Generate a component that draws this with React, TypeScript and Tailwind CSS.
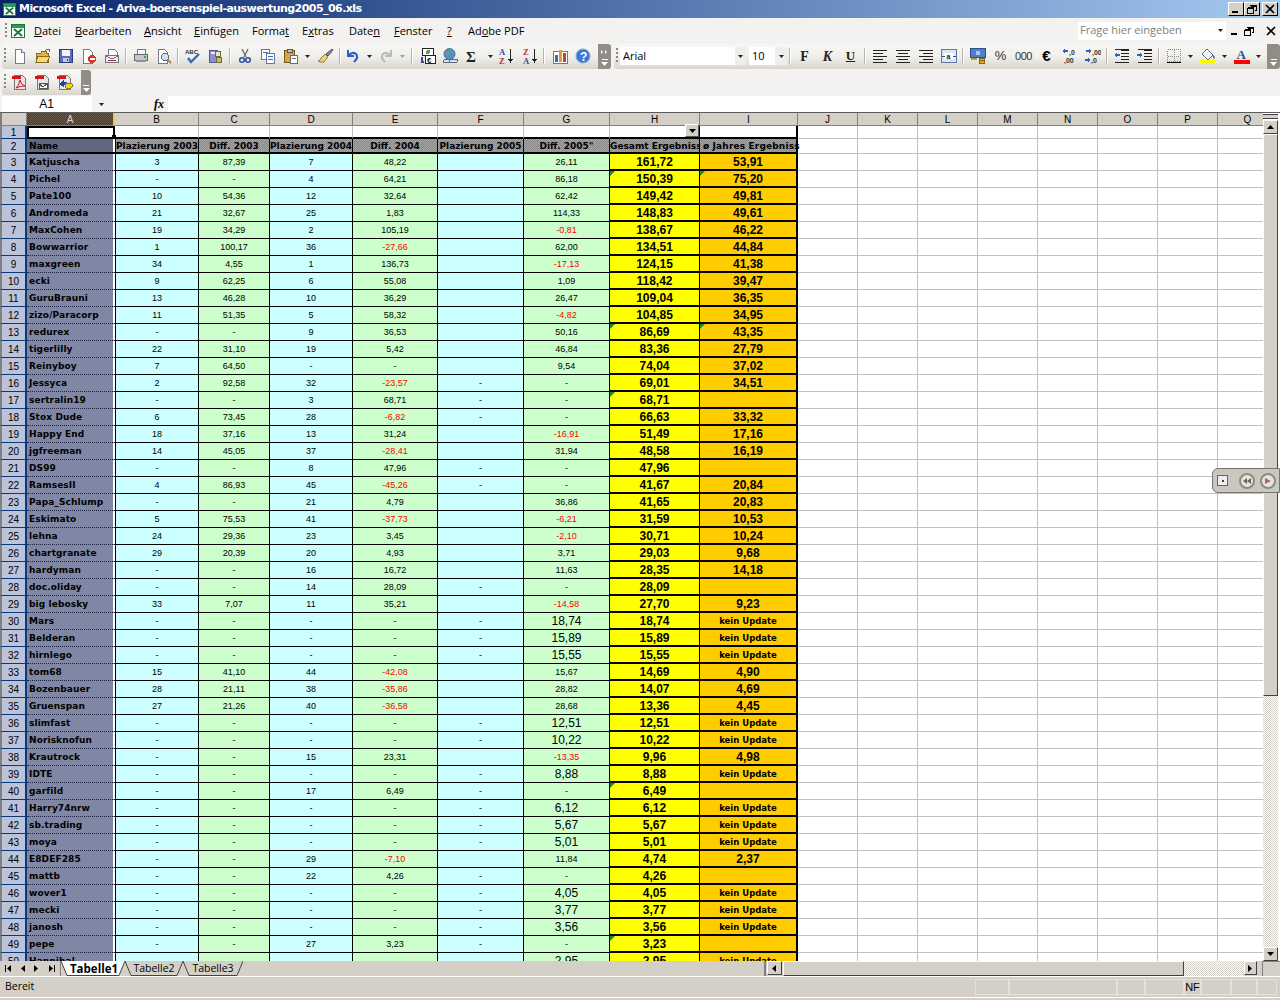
import React from "react";

const RAW = `Katjuscha|3|87,39|7|48,22||26,11|161,72|53,91
Pichel|-|-|4|64,21||86,18|*150,39|*75,20
Pate100|10|54,36|12|32,64||62,42|149,42|49,81
Andromeda|21|32,67|25|1,83||114,33|148,83|49,61
MaxCohen|19|34,29|2|105,19||-0,81|138,67|46,22
Bowwarrior|1|100,17|36|-27,66||62,00|134,51|44,84
maxgreen|34|4,55|1|136,73||-17,13|124,15|41,38
ecki|9|62,25|6|55,08||1,09|118,42|39,47
GuruBrauni|13|46,28|10|36,29||26,47|109,04|36,35
zizo/Paracorp|11|51,35|5|58,32||-4,82|104,85|34,95
redurex|-|-|9|36,53||50,16|*86,69|*43,35
tigerlilly|22|31,10|19|5,42||46,84|83,36|27,79
Reinyboy|7|64,50|-|-||9,54|74,04|37,02
Jessyca|2|92,58|32|-23,57|-|-|69,01|34,51
sertralin19|-|-|3|68,71|-|-|*68,71|
Stox Dude|6|73,45|28|-6,82|-|-|66,63|33,32
Happy End|18|37,16|13|31,24||-16,91|51,49|17,16
jgfreeman|14|45,05|37|-28,41||31,94|48,58|16,19
DS99|-|-|8|47,96|-|-|47,96|
RamsesII|4|86,93|45|-45,26|-|-|41,67|20,84
Papa_Schlump|-|-|21|4,79||36,86|41,65|20,83
Eskimato|5|75,53|41|-37,73||-6,21|31,59|10,53
lehna|24|29,36|23|3,45||-2,10|30,71|10,24
chartgranate|29|20,39|20|4,93||3,71|29,03|9,68
hardyman|-|-|16|16,72||11,63|28,35|14,18
doc.oliday|-|-|14|28,09|-|-|28,09|
big lebosky|33|7,07|11|35,21||-14,58|27,70|9,23
Mars|-|-|-|-|-|^18,74|18,74|k
Belderan|-|-|-|-|-|^15,89|15,89|k
hirnlego|-|-|-|-|-|^15,55|15,55|k
tom68|15|41,10|44|-42,08||15,67|14,69|4,90
Bozenbauer|28|21,11|38|-35,86||28,82|14,07|4,69
Gruenspan|27|21,26|40|-36,58||28,68|13,36|4,45
slimfast|-|-|-|-|-|^12,51|12,51|k
Norisknofun|-|-|-|-|-|^10,22|10,22|k
Krautrock|-|-|15|23,31||-13,35|9,96|4,98
IDTE|-|-|-|-|-|^8,88|8,88|k
garfild|-|-|17|6,49|-|-|*6,49|
Harry74nrw|-|-|-|-|-|^6,12|6,12|k
sb.trading|-|-|-|-|-|^5,67|5,67|k
moya|-|-|-|-|-|^5,01|5,01|k
E8DEF285|-|-|29|-7,10||11,84|4,74|2,37
mattb|-|-|22|4,26|-|-|4,26|
wover1|-|-|-|-|-|^4,05|4,05|k
mecki|-|-|-|-|-|^3,77|3,77|k
janosh|-|-|-|-|-|^3,56|3,56|k
pepe|-|-|27|3,23|-|-|*3,23|
Hannibal||||||^2,95|2,95|k`;
const ROWS = RAW.split("\n").map((l) => l.split("|"));
const COLS = ["A", "B", "C", "D", "E", "F", "G", "H", "I", "J", "K", "L", "M", "N", "O", "P", "Q"];
const HEADS = ["Plazierung 2003", "Diff. 2003", "Plazierung 2004", "Diff. 2004", "Plazierung 2005", "Diff. 2005\"", "Gesamt Ergebniss", "ø Jahres Ergebniss"];

const S = ({ children, w = 16, h = 16 }: { children: React.ReactNode; w?: number; h?: number }) => (
  <svg width={w} height={h} viewBox={`0 0 ${w} ${h}`} className="block" shapeRendering="crispEdges">{children}</svg>
);
const Page = ({ x = 3, y = 1, w = 10, h = 14 }: { x?: number; y?: number; w?: number; h?: number }) => (
  <path d={`M${x + .5} ${y + .5}h${w - 4}l3 3v${h - 3}h-${w - 1}z`} fill="#fff" stroke="#7a7a8c" />
);
const NewI = () => <S><Page /><path d="M9.5 1.5v3h3" fill="#d8d8e4" stroke="#7a7a8c" /></S>;
const OpenI = () => <S><path d="M1 5h5l1-2h4v2h2v9H1z" fill="#e8b33c" stroke="#8a6a1c" /><path d="M3 8h12l-3 6H1z" fill="#f8d878" stroke="#8a6a1c" /><path d="M10 3q2-3 5-1l-1 2" fill="none" stroke="#3b6fc4" /></S>;
const SaveI = () => <S><rect x="1.5" y="1.5" width="13" height="13" fill="#5a6bb8" stroke="#2c3a7a" /><rect x="4" y="2" width="8" height="6" fill="#f2f2f6" /><rect x="5" y="10" width="6" height="4" fill="#c8cce0" /><rect x="9" y="11" width="1" height="2" fill="#2c3a7a" /></S>;
const PermI = () => <S><Page x={2} /><circle cx="11" cy="11" r="4" fill="#d8352a" /><rect x="8.5" y="10" width="5" height="2" fill="#fff" /></S>;
const MailI = () => <S><Page x={4} w={10} h={9} /><rect x="1.5" y="7.5" width="13" height="7" fill="#eef0f4" stroke="#6d7488" /><path d="M2 8l6 3 6-3" fill="none" stroke="#6d7488" /><rect x="4" y="12" width="8" height="1" fill="#b03030" /></S>;
const PrintI = () => <S><rect x="4" y="1" width="8" height="5" fill="#f5f5f5" stroke="#777" /><rect x="1.5" y="6.5" width="13" height="6" rx="1" fill="#c2c6cc" stroke="#666" /><rect x="11" y="8" width="2" height="2" fill="#2fae3c" /><rect x="3" y="12" width="10" height="2" fill="#8d9096" /></S>;
const PrevI = () => <S><Page x={2} /><circle cx="9" cy="9" r="3.5" fill="#cfe3f6" stroke="#5a6a80" /><path d="M11.5 11.5l3.5 3.5" stroke="#b5832c" strokeWidth="2" shapeRendering="auto" /></S>;
const SpellI = () => <S><text x="0" y="6" fontSize="6" fontWeight="700" fontFamily="Liberation Sans" fill="#333">ABC</text><path d="M3 10l3 4 8-8" fill="none" stroke="#3a68b8" strokeWidth="2.4" shapeRendering="auto" /></S>;
const ResI = () => <S><rect x="1" y="2" width="8" height="12" fill="#8f8fd0" stroke="#55558c" /><rect x="3" y="4" width="4" height="2" fill="#eee" /><circle cx="10" cy="6" r="3" fill="#e8e4c8" stroke="#6a6a50" /><path d="M9 9h4v5H8z" fill="#d8b850" stroke="#6a6a50" /></S>;
const CutI = () => <S><path d="M5 1l4 8M11 1L7 9" stroke="#667" strokeWidth="1.3" shapeRendering="auto" /><circle cx="5" cy="12" r="2.3" fill="none" stroke="#2d4fa0" strokeWidth="1.5" shapeRendering="auto" /><circle cx="11" cy="12" r="2.3" fill="none" stroke="#2d4fa0" strokeWidth="1.5" shapeRendering="auto" /></S>;
const CopyI = () => <S><rect x="1.5" y="1.5" width="8" height="10" fill="#fff" stroke="#5f78a8" /><rect x="3" y="4" width="5" height="1" fill="#4a6ab0" /><rect x="6.5" y="5.5" width="8" height="10" fill="#fff" stroke="#5f78a8" /><rect x="8" y="8" width="5" height="1" fill="#4a6ab0" /><rect x="8" y="11" width="5" height="1" fill="#4a6ab0" /></S>;
const PasteI = () => <S><rect x="1.5" y="2.5" width="10" height="12" fill="#d7a53f" stroke="#75591c" /><rect x="4" y="1" width="5" height="3" fill="#c8c4bc" stroke="#555" /><rect x="7.5" y="7.5" width="7" height="8" fill="#fff" stroke="#5f6a84" /><rect x="9" y="10" width="4" height="1" fill="#5f6a84" /></S>;
const BrushI = () => <S><path d="M15 1l-6 5 2 2 5-6z" fill="#8a8aa0" stroke="#55556a" shapeRendering="auto" /><path d="M8 6l3 3-4 5q-3 1-6-1 3-1 3-3z" fill="#e8cf88" stroke="#9a7f38" shapeRendering="auto" /></S>;
const UndoI = () => <S><path d="M3 2v6h6" fill="none" stroke="#2e62c0" strokeWidth="2" shapeRendering="auto" /><path d="M3 8q4-5 8-2 3 3-2 8" fill="none" stroke="#2e62c0" strokeWidth="2.2" shapeRendering="auto" /></S>;
const RedoSvg = () => <svg width="16" height="16" viewBox="0 0 16 16" className="block"><g transform="matrix(-1 0 0 1 16 0)"><path d="M3 2v6h6" fill="none" stroke="#b8bcc0" strokeWidth="2" /><path d="M3 8q4-5 8-2 3 3-2 8" fill="none" stroke="#b8bcc0" strokeWidth="2.2" /></g></svg>;
const EuroI = () => <S><rect x="2.5" y="0.5" width="11" height="7" rx="1" fill="#fff" stroke="#222" /><circle cx="8" cy="4" r="2" fill="#5a9a5a" /><rect x="5.5" y="7.5" width="10" height="8" fill="#fff" stroke="#222" /><text x="7" y="14.5" fontSize="8" fontWeight="700" fontFamily="Liberation Sans" fill="#222">€</text><path d="M2 9v5h2" fill="none" stroke="#2d4fa0" strokeWidth="1.4" /></S>;
const LinkI = () => <S><circle cx="7.5" cy="6" r="5.5" fill="#4f8fd8" stroke="#5d6b88" shapeRendering="auto" /><path d="M4 3l3 1 1 3-3 1zM9 2l2 2-1 2z" fill="#58b050" /><rect x="1.5" y="11.5" width="8" height="3" rx="1.5" fill="#d8e0ec" stroke="#5d6b88" /><rect x="7.5" y="11.5" width="8" height="3" rx="1.5" fill="#d8e0ec" stroke="#5d6b88" /></S>;
const SigmaI = () => <S><text x="1" y="14" fontSize="15" fontWeight="700" fontFamily="Liberation Serif" fill="#222">Σ</text></S>;
const SortI = ({ a, b, ca, cb }: { a: string; b: string; ca: string; cb: string }) => <S><text x="0" y="7" fontSize="8.5" fontWeight="700" fontFamily="Liberation Serif" fill={ca}>{a}</text><text x="0" y="15.5" fontSize="8.5" fontWeight="700" fontFamily="Liberation Serif" fill={cb}>{b}</text><path d="M11.5 1v13" stroke="#222" /><path d="M9 11h5l-2.5 4z" fill="#222" /></S>;
const ChartI = () => <S><rect x="1" y="3" width="14" height="12" fill="#fff" stroke="#6a7a98" /><rect x="3" y="7" width="3" height="7" fill="#3a6ab8" /><rect x="7" y="2" width="3" height="12" fill="#d8a030" /><rect x="11" y="5" width="3" height="9" fill="#c84030" /></S>;
const HelpI = () => <S><circle cx="8" cy="8" r="7" fill="#3b78d8" stroke="#8da8d0" shapeRendering="auto" /><text x="5" y="12.5" fontSize="12" fontWeight="700" fontFamily="Liberation Sans" fill="#fff">?</text></S>;
const Lines = ({ a }: { a: "l" | "c" | "r" }) => {
  const d = [14, 10, 14, 10, 14];
  return <S>{d.map((w, i) => <rect key={i} x={a === "l" ? 1 : a === "c" ? 8 - w / 2 : 15 - w} y={2 + i * 3} width={w} height="1" fill="#222" />)}</S>;
};
const MergeI = () => <S><rect x="0.5" y="1.5" width="15" height="13" fill="#dfe6f2" stroke="#6078a0" /><rect x="3" y="5" width="10" height="6" fill="#fff" /><text x="5.5" y="10.5" fontSize="7" fontWeight="700" fontFamily="Liberation Sans" fill="#222">a</text><path d="M1 8h3M12 8h3" stroke="#2d4fa0" /></S>;
const CurI = () => <S><rect x="0.5" y="0.5" width="15" height="9" fill="#4f7fc8" stroke="#2c4f90" /><circle cx="8" cy="5" r="2.5" fill="#a8c8f0" /><ellipse cx="12" cy="12" rx="3" ry="1.5" fill="#e0a828" stroke="#8a6a10" /><ellipse cx="12" cy="14" rx="3" ry="1.5" fill="#e0a828" stroke="#8a6a10" /><path d="M1 11h6" stroke="#d09020" strokeWidth="2" /></S>;
const TextI = ({ t, cls }: { t: string; cls: string }) => <span className={cls}>{t}</span>;
const DecI = ({ inc }: { inc: boolean }) => <S><text x="7" y="7" fontSize="7" fontFamily="Liberation Sans" fontWeight="700" fill="#333">{inc ? ",0" : ",00"}</text><text x={inc ? 2 : 6} y="15" fontSize="7" fontFamily="Liberation Sans" fontWeight="700" fill="#333">{inc ? ",00" : ",0"}</text><path d={inc ? "M6 3H1M3 1L1 3l2 2" : "M1 3h5M4 1l2 2-2 2"} fill="none" stroke="#2e62c0" strokeWidth="1.2" /><path d={inc ? "M1 12h0" : "M0 12h5M3 10l2 2-2 2"} fill="none" stroke="#2e62c0" strokeWidth="1.2" /></S>;
const IndentI = ({ out }: { out: boolean }) => <S><rect x="7" y="2" width="8" height="1" fill="#222" /><rect x="7" y="5" width="8" height="1" fill="#222" /><rect x="7" y="8" width="8" height="1" fill="#222" /><rect x="7" y="11" width="8" height="1" fill="#222" /><rect x="1" y="14" width="14" height="1" fill="#222" /><rect x="1" y="1" width="14" height="1" fill="#222" /><path d={out ? "M6 7H1M3 5L1 7l2 2" : "M0 7h5M3 5l2 2-2 2"} fill="none" stroke="#2e62c0" strokeWidth="1.3" /></S>;
const BorderI = () => <S><rect x="1.5" y="1.5" width="13" height="12" fill="none" stroke="#888" strokeDasharray="1 1" /><path d="M8 2v12M2 8h12" stroke="#888" strokeDasharray="1 1" /><rect x="1" y="14" width="14" height="1" fill="#111" /></S>;
const FillI = () => <S><path d="M7 1l6 6-5 5-6-6z" fill="#f2f2f2" stroke="#5a6a80" shapeRendering="auto" /><path d="M13 7q3 2 1 4-2-2-1-4" fill="#2e62c0" shapeRendering="auto" /><rect x="0" y="12" width="16" height="4" fill="#ffff00" /></S>;
const ColorI = () => <S><text x="2.5" y="11" fontSize="13" fontWeight="700" fontFamily="Liberation Serif" fill="#2a4f9a">A</text><rect x="0" y="12" width="16" height="4" fill="#ff0000" /></S>;
const PdfI = ({ k }: { k: number }) => <S><path d="M2.5 1.5h8l3 3v11h-11z" fill="#e6e6e6" stroke="#777" /><rect x="0" y="2" width="9" height="3" fill="#d01818" />{k === 0 && <path d="M4 14q3-2 4-8 1 5 5 6-5 0-9 2z" fill="none" stroke="#d01818" shapeRendering="auto" />}{k === 1 && <path d="M4 9.5h8v5H4zM4 10l4 3 4-3" fill="#fff" stroke="#555" />}{k === 2 && <><path d="M2 10l5-4v2h3v3H7v2z" fill="#1c3fb0" /><rect x="8" y="9" width="7" height="5" rx="1" fill="#f2d020" stroke="#8a7a10" /></>}</S>;
const ExcelI = ({ s = 14 }: { s?: number }) => <svg width={s} height={s} viewBox="0 0 14 14" className="block" shapeRendering="crispEdges"><rect x="0.5" y="0.5" width="13" height="13" fill="#fff" stroke="#167a3c" /><rect x="1" y="1" width="12" height="3" fill="#2e9a54" /><path d="M3 5l8 7M11 5l-8 7" stroke="#167a3c" strokeWidth="2" shapeRendering="auto" /></svg>;

const Btn = ({ children, w = 23 }: { children?: React.ReactNode; w?: number }) => (
  <div className="flex h-full shrink-0 items-center justify-center" style={{ width: w }}>{children}</div>
);
const Arrow = ({ w = 11, c = "#222" }: { w?: number; c?: string }) => (
  <div className="flex h-full shrink-0 items-center justify-center" style={{ width: w }}>
    <svg width="5" height="3" viewBox="0 0 5 3" className="block"><path d="M0 0h5L2.5 3z" fill={c} /></svg>
  </div>
);
const Sep = () => <div className="mx-[2px] my-[4px] h-[16px] w-[2px] shrink-0 border-l border-[#b8b5ac] bg-white" />;
const Grip = () => <div className="mx-[2px] my-[4px] h-[16px] w-[2px] shrink-0 bg-[repeating-linear-gradient(#8a887f_0_2px,transparent_2px_4px)]" />;
const Chev = ({ more = false, w = 10 }: { more?: boolean; w?: number }) => (
  <div className="flex h-[25px] shrink-0 flex-col items-center justify-end gap-[2px] rounded-r-[3px] bg-[#8f8d86] pb-[3px]" style={{ width: w }}>
    {more && <svg width="7" height="4" viewBox="0 0 7 4" className="mb-[3px] block"><path d="M0 0l2 2-2 2zM4 0l2 2-2 2z" fill="#fff" /></svg>}
    <div className="h-[1px] w-[6px] bg-white" />
    <svg width="7" height="4" viewBox="0 0 7 4" className="block"><path d="M0 0h7L3.5 4z" fill="#fff" /></svg>
  </div>
);
const TB = "flex h-[25px] items-center bg-gradient-to-b from-[#f8f7f5] via-[#f0efeb] to-[#d9d6ce] pb-[1px]";

function U({ t, i }: { t: string; i: number }) {
  return <>{t.slice(0, i)}<u className="underline-offset-1">{t[i]}</u>{t.slice(i + 1)}</>;
}
const MENU: [string, number, number][] = [["Datei", 0, 41], ["Bearbeiten", 0, 69], ["Ansicht", 0, 50], ["Einfügen", 0, 58], ["Format", 5, 50], ["Extras", 1, 47], ["Daten", 4, 45], ["Fenster", 0, 53], ["?", 0, 21], ["Adobe PDF", 2, 90]];

const WinBtn = ({ k }: { k: "min" | "max" | "x" }) => (
  <div className="flex h-[14px] w-[16px] items-center justify-center border border-t-white border-l-white border-r-black border-b-black bg-[#d4d0c8]">
    <WinGlyph k={k} />
  </div>
);
const WinGlyph = ({ k, c = "#000" }: { k: "min" | "max" | "x"; c?: string }) => (
  <svg width="10" height="10" viewBox="0 0 10 10" className="block" shapeRendering="crispEdges">
    {k === "min" && <rect x="1" y="7" width="6" height="2" fill={c} />}
    {k === "max" && <path d="M3.5 2.5h6v4h-2M3 1.5h6.5M.5 4.5h6v5h-6zM1 3.5h6" fill="none" stroke={c} />}
    {k === "x" && <path d="M1 1l8 8M9 1L1 9" stroke={c} strokeWidth="1.6" shapeRendering="auto" />}
  </svg>
);

const ScrollBtn = ({ d, h = "h-[14px]", w = "w-full" }: { d: string; h?: string; w?: string }) => (
  <div className={`flex shrink-0 items-center justify-center border border-t-white border-l-white border-r-[#404040] border-b-[#404040] bg-[#d4d0c8] ${h} ${w}`}>
    <svg width="7" height="7" viewBox="0 0 7 7" className="block"><path d={d} fill="#000" /></svg>
  </div>
);
const DITHER = "bg-[repeating-conic-gradient(#d4d0c8_0_25%,#ffffff_0_50%)] bg-[length:2px_2px]";

const NUM = "pt-[1px] font-['Liberation_Sans',sans-serif] text-[9px] text-black";
const BOLD = "font-['DejaVu_Sans',sans-serif] font-bold";
const ROWHEAD = "flex items-center justify-center border-b border-r-2 border-l-2 border-b-[#0c3a78] border-r-[#0c3a78] border-l-[#808080] bg-[#bac3da] pt-[1px] font-['Liberation_Sans',sans-serif] text-[10px] text-black";

function Row({ r, idx }: { r: string[]; idx: number }) {
  const n = idx + 3;
  const dataCols = r.slice(1, 7);
  return (
    <>
      <div className={ROWHEAD}>{n}</div>
      <div className={`flex items-center overflow-hidden whitespace-nowrap border-b border-dotted border-b-[#1c2444] bg-[#7f87a4] pl-[2px] pt-[2px] text-[9px] tracking-[0.1px] text-black shadow-[inset_-2px_0_0_#fff] ${BOLD}`}>{r[0]}</div>
      {dataCols.map((v, i) => {
        const big = v[0] === "^";
        const t = big ? v.slice(1) : v;
        const red = t.length > 1 && t[0] === "-";
        return (
          <div key={i} className={`flex items-center justify-center border-b border-r border-black ${i === 0 ? "border-l" : ""} ${i % 2 === 0 ? "bg-[#ccffff]" : "bg-[#ccffcc]"}`}>
            <span className={big ? "font-['Liberation_Sans',sans-serif] text-[12px] text-black" : red ? "pt-[1px] font-['Liberation_Sans',sans-serif] text-[9px] text-[#ff0000]" : NUM}>{t}</span>
          </div>
        );
      })}
      <BigCell v={r[7]} bg="bg-[#ffff00]" />
      <BigCell v={r[8]} bg="bg-[#ffcc00]" right />
      {Array.from({ length: 8 }).map((_, i) => <div key={i} className="border-b border-r border-[#c0c0c0]" />)}
    </>
  );
}
function BigCell({ v, bg, right = false }: { v: string; bg: string; right?: boolean }) {
  const star = v[0] === "*";
  const t = star ? v.slice(1) : v;
  return (
    <div className={`relative flex items-center justify-center border-b-2 border-r border-black ${right ? "border-r-2" : ""} ${bg}`}>
      {star && <div className="absolute left-0 top-0 h-0 w-0 border-r-[5px] border-t-[5px] border-r-transparent border-t-[#1b8a2a]" />}
      {t === "k"
        ? <span className={`whitespace-nowrap pt-[1px] text-[8.5px] text-black ${BOLD}`}>kein Update</span>
        : <span className="font-['Liberation_Sans',sans-serif] text-[12px] font-bold text-black">{t}</span>}
    </div>
  );
}

export default function App() {
  return (
    <div className="h-[1000px] w-[1280px] overflow-hidden bg-[#d4d0c8] font-['Liberation_Sans',sans-serif]">
      {/* title bar */}
      <div className="flex h-[18px] items-center bg-gradient-to-r from-[#0a246a] to-[#a6caf0] pl-[3px] pr-[2px]">
        <ExcelI s={13} />
        <div className="ml-[3px] flex-1 whitespace-nowrap font-['DejaVu_Sans',sans-serif] text-[11px] font-bold tracking-[-0.55px] text-white">Microsoft Excel - Ariva-boersenspiel-auswertung2005_06.xls</div>
        <WinBtn k="min" /><WinBtn k="max" /><div className="w-[2px]" /><WinBtn k="x" />
      </div>

      {/* menu */}
      <div className="flex h-[26px] items-center bg-[#f3f2f0]">
        <div className="ml-[5px] h-[16px] w-[2px] bg-[repeating-linear-gradient(#8a887f_0_2px,transparent_2px_4px)]" />
        <div className="ml-[4px] flex w-[23px] shrink-0 items-center"><ExcelI s={14} /></div>
        {MENU.map(([t, i, w]) => (
          <div key={t} className="shrink-0 whitespace-nowrap font-['Open_Sans',sans-serif] text-[11px] text-black" style={{ width: w }}><U t={t} i={i} /></div>
        ))}
        <div className="flex-1" />
        <div className="flex h-[18px] w-[148px] items-center bg-white pb-[1px] pl-[2px]">
          <div className="flex-1 font-['Open_Sans',sans-serif] text-[11px] text-[#808080]">Frage hier eingeben</div>
          <Arrow w={12} />
        </div>
        <div className="ml-[4px] flex w-[50px] items-center justify-between pr-[4px]">
          <WinGlyph k="min" /><WinGlyph k="max" /><div className="ml-[8px]"><WinGlyph k="x" /></div>
        </div>
      </div>

      {/* standard + format toolbars */}
      <div className="flex h-[26px] bg-[#f3f2f0] pl-[2px]">
        <div className={`${TB} rounded-l-[3px] pr-[5px]`}>
          <Grip />
          <Btn><NewI /></Btn><Btn><OpenI /></Btn><Btn><SaveI /></Btn><Btn><PermI /></Btn><Btn><MailI /></Btn>
          <Sep />
          <Btn><PrintI /></Btn><Btn><PrevI /></Btn>
          <Sep />
          <Btn><SpellI /></Btn><Btn><ResI /></Btn>
          <Sep />
          <Btn><CutI /></Btn><Btn><CopyI /></Btn>
          <Btn><PasteI /></Btn><Arrow /><Btn w={24}><BrushI /></Btn>
          <Sep />
          <Btn w={20}><UndoI /></Btn><Arrow w={13} /><Btn w={20}><RedoSvg /></Btn><Arrow w={13} c="#a0a0a0" />
          <Sep />
          <Btn w={26}><EuroI /></Btn><Btn w={18}><LinkI /></Btn>
          <Btn w={28}><SigmaI /></Btn><Arrow w={6} />
          <Btn w={28}><SortI a="A" b="Z" ca="#2a4fa8" cb="#b83030" /></Btn>
          <Btn w={20}><SortI a="Z" b="A" ca="#b83030" cb="#2a4fa8" /></Btn>
          <Sep />
          <Btn w={26}><ChartI /></Btn><Btn w={20}><HelpI /></Btn>
        </div>
        <Chev more w={13} />
        <div className="w-[3px]" />
        <div className={`${TB} flex-1 rounded-l-[3px]`}>
          <Grip />
          <div className="flex h-[18px] w-[126px] shrink-0 items-center bg-white pl-[3px] text-[12px] text-black">
            <span className="flex-1 font-['Open_Sans',sans-serif] text-[11px]">Arial</span>
            <div className="h-full w-[11px] bg-[#efeeea]"><Arrow w={11} /></div>
          </div>
          <div className="ml-[3px] flex h-[18px] w-[38px] shrink-0 items-center bg-white pl-[3px]">
            <span className="flex-1 font-['Open_Sans',sans-serif] text-[11px] text-black">10</span>
            <div className="h-full w-[12px] bg-[#efeeea]"><Arrow w={12} /></div>
          </div>
          <Sep />
          <Btn><TextI t="F" cls="font-['Liberation_Serif',serif] text-[14px] font-bold text-[#222]" /></Btn>
          <Btn><TextI t="K" cls="font-['Liberation_Serif',serif] text-[14px] font-bold italic text-[#222]" /></Btn>
          <Btn><TextI t="U" cls="font-['Liberation_Serif',serif] text-[13px] font-bold text-[#222] underline" /></Btn>
          <Sep />
          <Btn><Lines a="l" /></Btn><Btn><Lines a="c" /></Btn><Btn><Lines a="r" /></Btn><Btn><MergeI /></Btn>
          <Sep />
          <Btn><CurI /></Btn>
          <Btn><TextI t="%" cls="font-['Liberation_Sans',sans-serif] text-[13px] text-[#333]" /></Btn>
          <Btn><TextI t="000" cls="font-['Liberation_Sans',sans-serif] text-[11px] tracking-[-0.5px] text-[#333]" /></Btn>
          <Btn><TextI t="€" cls="font-['Liberation_Sans',sans-serif] text-[15px] font-bold text-black" /></Btn>
          <Btn><DecI inc /></Btn><Btn><DecI inc={false} /></Btn>
          <Sep />
          <Btn><IndentI out /></Btn><Btn><IndentI out={false} /></Btn>
          <Sep />
          <div className="w-[1px] shrink-0" />
          <Btn w={21}><BorderI /></Btn><Arrow w={13} />
          <Btn w={21}><FillI /></Btn><Arrow w={13} />
          <Btn w={21}><ColorI /></Btn><Arrow w={13} />
        </div>
        <Chev w={13} />
      </div>

      {/* pdf toolbar */}
      <div className="flex h-[26px] bg-[#f3f2f0] pl-[2px]">
        <div className={`${TB} rounded-l-[3px] pr-[5px]`}>
          <Grip />
          <Btn><PdfI k={0} /></Btn><Btn><PdfI k={1} /></Btn><Btn w={22}><PdfI k={2} /></Btn>
        </div>
        <Chev />
      </div>

      {/* formula bar */}
      <div className="flex h-[16px] bg-[#f3f2f0]">
        <div className="ml-[2px] flex w-[90px] items-center justify-center bg-white pb-[1px] pr-[1px] text-[12px] text-black">A1</div>
        <Arrow w={18} />
        <div className="flex w-[58px] items-center justify-end pr-[4px] font-['Liberation_Serif',serif] text-[12px] font-bold italic text-black">fx</div>
        <div className="flex-1 bg-white" />
      </div>

      {/* sheet */}
      <div className="relative flex h-[849px] overflow-hidden border-t border-[#5a5a5a] bg-white">
        <div className="grid h-[848px] w-[1263px] shrink-0 grid-cols-[27px_88px_84px_71px_83px_85px_86px_86px_90px_98px_60px_60px_60px_60px_60px_60px_60px_60px] grid-rows-[13px_13px_15px_repeat(48,17px)] overflow-hidden">
          <div className="border-b border-r border-l-2 border-[#808080] bg-[#d4d0c8]" />
          {COLS.map((c, i) => (
            <div key={c} className={i === 0
              ? "flex items-center justify-center border-b border-r-2 border-b-[#808080] border-r-[#e8c860] bg-[repeating-conic-gradient(#3c4430_0_25%,#6a5a48_0_50%)] bg-[length:2px_2px] text-[10px] text-[#d8d8d8]"
              : "flex items-center justify-center border-b border-r border-[#808080] bg-[#d4d0c8] text-[10px] text-black"}>{c}</div>
          ))}

          {/* row 1 */}
          <div className={ROWHEAD}>1</div>
          <div className="relative border-2 border-black bg-white">
            <div className="absolute -bottom-[2px] -right-[3px] h-[4px] w-[4px] bg-black" />
          </div>
          {Array.from({ length: 8 }).map((_, i) => (
            <div key={i} className={`relative border-b-2 border-r border-b-black border-r-[#c0c0c0] ${i === 7 ? "border-r-2 border-r-black" : ""} ${i === 6 ? "border-r-black" : ""}`}>
              {i === 6 && (
                <div className="absolute bottom-0 right-0 flex h-[13px] w-[14px] items-center justify-center border border-t-white border-l-white border-r-[#555] border-b-[#555] bg-[#d4d0c8]">
                  <svg width="7" height="4" viewBox="0 0 7 4" className="block"><path d="M0 0h7L3.5 4z" fill="#000" /></svg>
                </div>
              )}
            </div>
          ))}
          {Array.from({ length: 8 }).map((_, i) => <div key={i} className="border-b border-r border-[#c0c0c0]" />)}

          {/* row 2 */}
          <div className={ROWHEAD}>2</div>
          <div className={`flex items-center border-b-2 border-black bg-[#5f6782] pl-[2px] pt-[2px] text-[9px] text-black shadow-[inset_-2px_0_0_#fff] ${BOLD}`}>Name</div>
          {HEADS.map((h, i) => (
            <div key={h} className={`relative flex items-center whitespace-nowrap border-b-2 border-r border-black bg-[repeating-conic-gradient(#8a8a8a_0_25%,#a4a4a4_0_50%)] bg-[length:2px_2px] pt-[2px] text-[9px] text-black ${BOLD} ${i === 0 ? "border-l" : ""} ${i === 7 ? "justify-start border-r-2 pl-[3px] tracking-[0.15px]" : i === 6 ? "justify-start overflow-hidden" : "justify-center"}`}>{h}</div>
          ))}
          {Array.from({ length: 8 }).map((_, i) => <div key={i} className="border-b border-r border-[#c0c0c0]" />)}

          {ROWS.map((r, i) => <Row key={i} r={r} idx={i} />)}
        </div>

        {/* vertical scrollbar */}
        <div className="flex h-full w-[15px] shrink-0 flex-col">
          <div className="mb-[1px] mt-[1px] h-[5px] shrink-0 border-b border-t border-[#404040] bg-[#d4d0c8]" />
          <ScrollBtn d="M3.5 1L7 5H0z" />
          <div className="h-[562px] shrink-0 border border-t-white border-l-white border-r-[#404040] border-b-[#404040] bg-[#d4d0c8]" />
          <div className={`flex-1 ${DITHER}`} />
          <ScrollBtn d="M0 1h7L3.5 5z" />
        </div>

        {/* floating toolbar */}
        <div className="absolute left-[1212px] top-[355px] flex h-[25px] w-[68px] items-center gap-[5px] rounded-l-[6px] border border-[#77756e] bg-[#cac7bf] pl-[4px]">
          <div className="flex h-[11px] w-[11px] items-center justify-center border border-[#666] bg-[#eee]">
            <div className="h-[2px] w-[2px] bg-[#444]" />
          </div>
          <div className="ml-[6px] flex h-[16px] w-[16px] items-center justify-center rounded-full border-2 border-[#8d8b85] bg-[#e6e4de]">
            <svg width="8" height="6" viewBox="0 0 8 6" className="block"><path d="M4 0v6L0 3zM8 0v6L4 3z" fill="#666" /></svg>
          </div>
          <div className="flex h-[16px] w-[16px] items-center justify-center rounded-full border-2 border-[#8d8b85] bg-[#e6e4de]">
            <svg width="6" height="6" viewBox="0 0 6 6" className="block"><path d="M0 0v6l6-3z" fill="#a06a70" /></svg>
          </div>
        </div>
      </div>

      {/* tabs + h scrollbar */}
      <div className="flex h-[15px] bg-[#d4d0c8]">
        <div className="flex w-[61px] shrink-0 items-center justify-between border-r border-[#808080] px-[4px]">
          <svg width="8" height="7" viewBox="0 0 8 7" className="block"><path d="M1 0h1v7H1zM7 0v7L3 3.5z" fill="#000" /></svg>
          <svg width="5" height="7" viewBox="0 0 5 7" className="block"><path d="M4 0v7L0 3.5z" fill="#000" /></svg>
          <svg width="5" height="7" viewBox="0 0 5 7" className="block"><path d="M0 0v7l4-3.5z" fill="#000" /></svg>
          <svg width="8" height="7" viewBox="0 0 8 7" className="block"><path d="M1 0v7l4-3.5zM6 0h1v7H6z" fill="#000" /></svg>
        </div>
        <SheetTab w={64} label="Tabelle1" active />
        <SheetTab w={58} label="Tabelle2" />
        <SheetTab w={60} label="Tabelle3" />
        <div className="flex-1" />
        <div className="mr-[1px] w-[2px] border-l border-r border-[#808080]" />
        <ScrollBtn d="M5 0v7L1 3.5z" w="w-[15px]" />
        <div className="ml-[1px] h-full w-[401px] shrink-0 border border-t-white border-l-white border-r-[#404040] border-b-[#404040] bg-[#d4d0c8]" />
        <div className={`w-[60px] shrink-0 ${DITHER}`} />
        <ScrollBtn d="M1 0v7l4-3.5z" w="w-[13px]" />
        <div className="ml-[5px] w-[18px] shrink-0 border-l border-t border-[#808080]" />
      </div>

      {/* status bar */}
      <div className="flex h-[22px] items-center border-t border-b border-white bg-[#d4d0c8] py-[2px] pl-[5px] pr-[3px]">
        <div className="flex-1 font-['Open_Sans',sans-serif] text-[10.5px] text-black">Bereit</div>
        {[34, 108, 28, 39, 17, 30, 26, 20].map((w, i) => (
          <div key={i} className="flex h-full shrink-0 items-center justify-center border border-[#e4e2dc] text-[11px] text-black" style={{ width: w }}>{i === 4 ? "NF" : ""}</div>
        ))}
      </div>
    </div>
  );
}

function SheetTab({ w, label, active = false }: { w: number; label: string; active?: boolean }) {
  return (
    <div className={`relative h-[15px] shrink-0 ${active ? "z-10" : ""}`} style={{ width: w }}>
      <svg width={w} height={15} viewBox={`0 0 ${w} 15`} className="absolute left-0 top-0 block">
        <path d={`M0 0L6 14.5H${w - 6}L${w} 0`} fill={active ? "#fff" : "#d4d0c8"} stroke="#444" />
      </svg>
      <div className={`relative flex h-full items-center justify-center font-['Open_Sans',sans-serif] text-black ${active ? "pl-[2px] text-[11.5px] font-bold" : "text-[10.5px]"}`}>{label}</div>
    </div>
  );
}
